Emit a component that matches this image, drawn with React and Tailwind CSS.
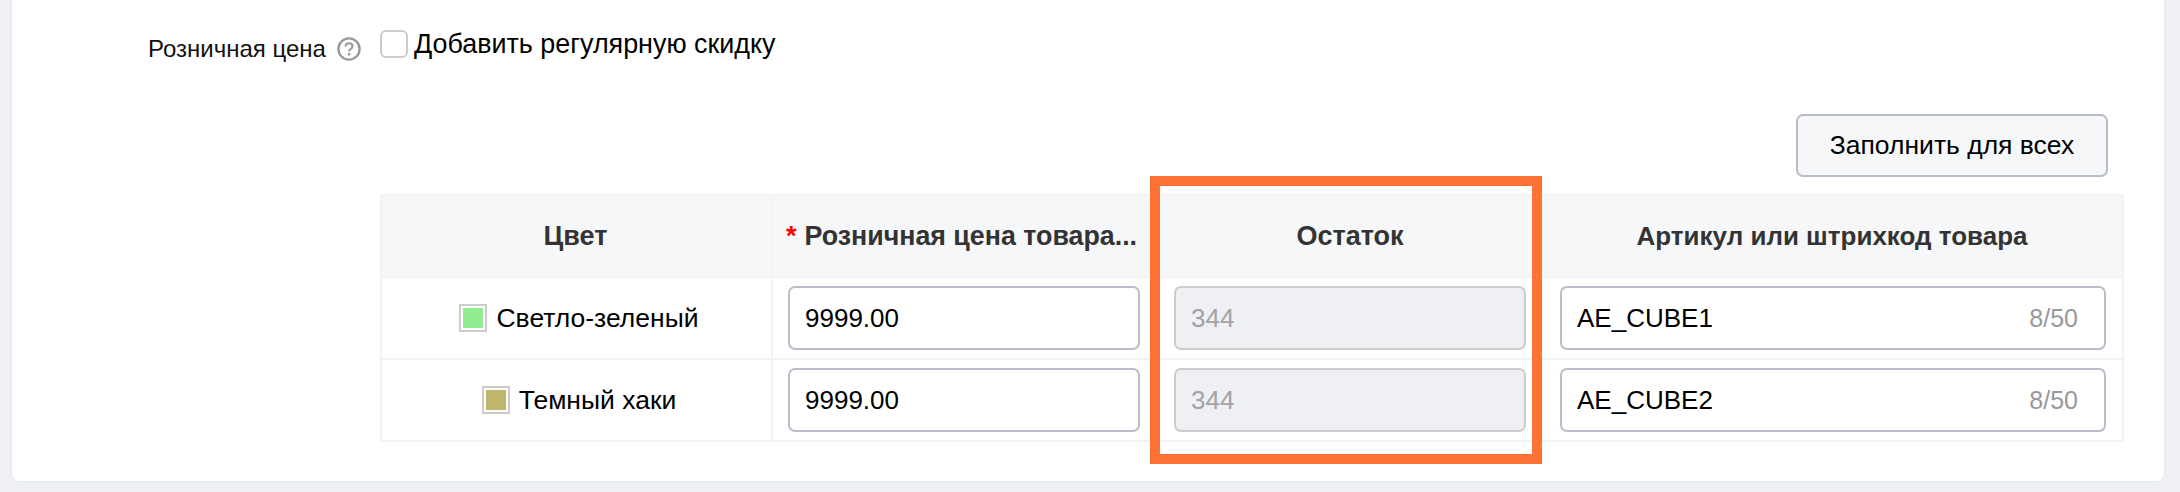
import React from "react";

const font = { fontFamily: '"Liberation Sans", Arial, sans-serif' };

function HelpIcon() {
  return (
    <svg width="24" height="24" viewBox="0 0 24 24" fill="none" className="shrink-0">
      <circle cx="12" cy="12" r="10.6" stroke="#999" strokeWidth="2.4" />
      <path d="M8.6 9.6c0-2.1 1.5-3.4 3.5-3.4 2 0 3.4 1.2 3.4 3 0 1.4-.8 2.1-1.8 2.8-1 .7-1.6 1.2-1.6 2.6" stroke="#999" strokeWidth="2.1" fill="none" />
      <rect x="10.9" y="16" width="2.4" height="2.4" fill="#999" />
    </svg>
  );
}

function Swatch({ colorClass }) {
  return (
    <span className="block w-[28px] h-[28px] border-[2px] border-[#cccccc] p-[2px] bg-white shrink-0">
      <span className={`block w-full h-full ${colorClass}`} />
    </span>
  );
}

function ColorCell({ colorClass, label }) {
  return (
    <div className="w-[391px] h-full shrink-0 flex items-center justify-center gap-[9px] pl-[5px] border-r-[2px] border-[#f2f3f5] text-[26.5px] text-black">
      <Swatch colorClass={colorClass} />
      <span className="pt-[1px]">{label}</span>
    </div>
  );
}

function PriceCell() {
  return (
    <div className="w-[385px] h-full shrink-0 flex items-center pl-[15px]">
      <div className="w-[352px] h-[64px] rounded-[7px] border-[2px] border-[#b8bdc9] bg-white flex items-center pl-[15px] pt-[1px] text-[26px] text-black">
        9999.00
      </div>
    </div>
  );
}

function StockCell() {
  return (
    <div className="w-[384px] h-full shrink-0 flex items-center pl-[16px]">
      <div className="w-[352px] h-[64px] rounded-[7px] border-[2px] border-[#cccccc] bg-[#eff0f4] flex items-center pl-[15px] pt-[1px] text-[26px] text-[#a3a3a3]">
        344
      </div>
    </div>
  );
}

function SkuCell({ value }) {
  return (
    <div className="w-[580px] h-full shrink-0 flex items-center pl-[18px]">
      <div className="w-[546px] h-[64px] rounded-[7px] border-[2px] border-[#b8bdc9] bg-white flex items-center justify-between pl-[15px] pr-[26px] pt-[1px] text-[26px] text-black">
        <span>{value}</span>
        <span className="text-[25px] text-[#999999]">8/50</span>
      </div>
    </div>
  );
}

function Row({ colorClass, label, sku, last }) {
  return (
    <div className={`flex items-center ${last ? "h-[80px]" : "h-[82px] border-b-[2px] border-[#f2f3f5]"}`}>
      <ColorCell colorClass={colorClass} label={label} />
      <PriceCell />
      <StockCell />
      <SkuCell value={sku} />
    </div>
  );
}

export default function App() {
  return (
    <div style={font} className="w-[2180px] h-[492px] overflow-hidden bg-[#eff0f5] pl-[10px] pr-[14px] pb-[9px]">
      <div className="relative h-full bg-white rounded-b-[10px] border-x-[2px] border-b-[2px] border-[#e8edf3] flex flex-col pt-[30px] pl-[136px]">
        <div className="flex h-[28px]">
          <div className="w-[232px] shrink-0 flex items-center gap-[11px] pt-[10px] text-[24px] text-[#111111]">
            <span>Розничная цена</span>
            <HelpIcon />
          </div>
          <div className="flex items-center">
            <span className="block w-[28px] h-[28px] rounded-[6px] border-[2px] border-[#cccccc] bg-white" />
            <span className="ml-[6px] pt-[1px] text-[26.9px] text-black">Добавить регулярную скидку</span>
          </div>
        </div>
        <div className="flex justify-end mt-[56px] pr-[56px]">
          <div className="w-[312px] h-[63px] rounded-[7px] border-[2px] border-[#b8bdc9] bg-[#f6f7f9] flex items-center justify-center text-[26.5px] text-black">
            Заполнить для всех
          </div>
        </div>
        <div className="ml-[232px] mt-[17px] w-[1744px] border-[2px] border-[#f2f3f5]">
          <div className="flex h-[82px] bg-[#f6f7f9] border-b-[2px] border-[#f2f3f5] font-bold text-[#333333]">
            <div className="w-[391px] shrink-0 flex items-center justify-center border-r-[2px] border-[#f2f3f5] text-[27px] pr-[2px]">Цвет</div>
            <div className="w-[385px] shrink-0 flex items-center pl-[13px] text-[26.8px] whitespace-nowrap">
              <span className="text-[#ff0000] mr-[8px]">*</span>
              <span>Розничная цена товара...</span>
            </div>
            <div className="w-[384px] shrink-0 flex items-center justify-center text-[27px]">Остаток</div>
            <div className="w-[580px] shrink-0 flex items-center justify-center text-[26px]">Артикул или штрихкод товара</div>
          </div>
          <Row colorClass="bg-[#90ee90]" label="Светло-зеленый" sku="AE_CUBE1" />
          <Row colorClass="bg-[#bdb76b]" label="Темный хаки" sku="AE_CUBE2" last />
        </div>
        <div className="absolute left-[1138px] top-[176px] w-[392px] h-[288px] border-[10px] border-[#ff7235]" />
      </div>
    </div>
  );
}
